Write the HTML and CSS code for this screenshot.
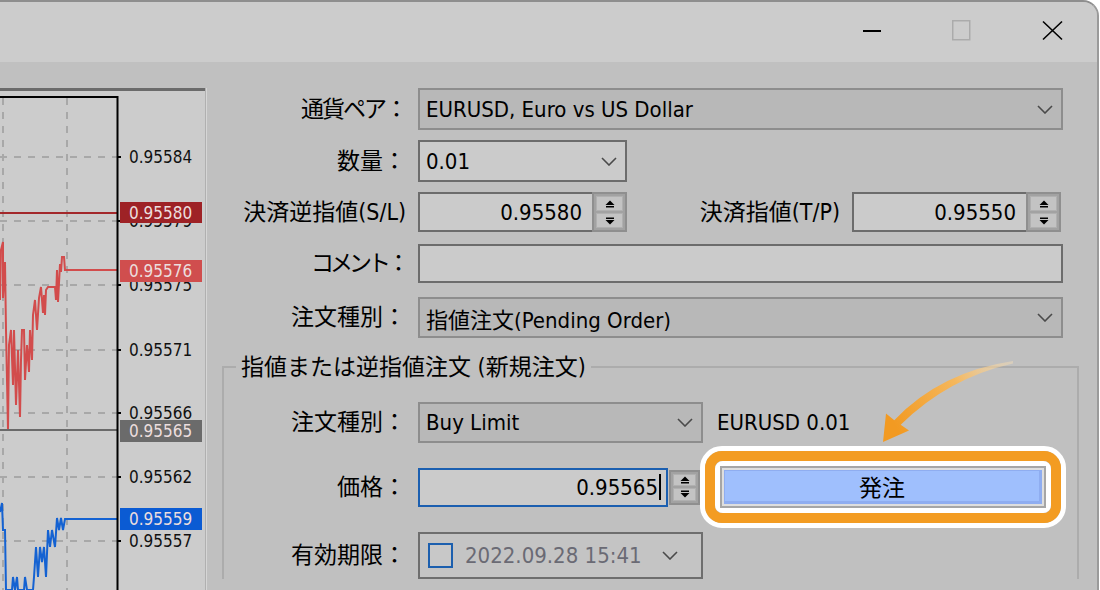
FILE: index.html
```html
<!DOCTYPE html>
<html lang="ja">
<head>
<meta charset="utf-8">
<title>注文</title>
<link rel="stylesheet" href="styles.css">
</head>
<body>
<div class="window">
  <header class="titlebar">
    <div class="tb-btn"><svg width="24" height="24" viewBox="0 0 24 24"><line x1="3" y1="12" x2="21" y2="12" stroke="#000" stroke-width="2"/></svg></div>
    <div class="tb-btn"><svg width="24" height="24" viewBox="0 0 24 24"><rect x="2.75" y="1.75" width="17" height="19" fill="none" stroke="#ababab" stroke-width="1.5"/></svg></div>
    <div class="tb-btn"><svg width="24" height="24" viewBox="0 0 24 24"><path d="M3 2.5L22 20.5M22 2.5L3 20.5" stroke="#000" stroke-width="1.6" fill="none"/></svg></div>
  </header>

  <div class="main">
    <svg class="chart" width="207" height="528" viewBox="0 62 207 528">
      <rect x="0" y="88" width="205" height="502" fill="#cccccc"/>
      <rect x="0" y="88" width="205" height="3" fill="#6b6b6b"/>
      <rect x="205" y="88" width="1" height="502" fill="#b0b0b0"/>
      <rect x="206" y="88" width="1" height="502" fill="#d6d6d6"/>
      <path d="M3 98V590M67 98V590" stroke="#a8a8a8" stroke-width="2" stroke-dasharray="7 7" fill="none"/>
      <path d="M0 157H117M0 221H117M0 285H117M0 350H117M0 413H117M0 477H117M0 541H117" stroke="#a8a8a8" stroke-width="2" stroke-dasharray="7 7" fill="none"/>

      <polyline fill="none" stroke="#d24c4c" stroke-width="2" points="0,300 1,250 3,242 3,298 5,262 6,330 8,430 9,345 11,330 13,385 14,330 16,405 18,350 20,417 21,360 22,330 24,330 25,380 27,345 29,372 30,330 32,360 33,315 35,300 37,330 39,298 41,287 43,313 44,295 45,315 46,290 48,287 55,287 56,300 57,270 58,302 60,264 61,272 62,257 64,257 65,270 117,270"/>
      <polyline fill="none" stroke="#1462d2" stroke-width="2" points="0,512 2,503 3,530 5,530 6,590 12,590 13,577 15,590 17,577 18,590 24,590 25,577 27,590 33,590 34,577 36,547 38,577 40,547 42,562 44,547 46,577 48,530 50,547 52,530 55,547 57,518 59,530 61,518 63,530 65,519 117,519"/>

      <path d="M0 213H117" stroke="#a3282b" stroke-width="2"/>
      <path d="M0 430H117" stroke="#6a6a6a" stroke-width="2"/>

      <path d="M0 97H117.5V590" stroke="#000" stroke-width="2" fill="none"/>
      <path d="M117 157h4M117 221h4M117 285h4M117 350h4M117 413h4M117 477h4M117 541h4" stroke="#000" stroke-width="2"/>

      <text class="ax" x="129" y="163">0.95584</text>
      <text class="ax" x="129" y="227">0.95579</text>
      <text class="ax" x="129" y="291">0.95575</text>
      <text class="ax" x="129" y="356">0.95571</text>
      <text class="ax" x="129" y="419">0.95566</text>
      <text class="ax" x="129" y="483">0.95562</text>
      <text class="ax" x="129" y="547">0.95557</text>

      <rect x="120" y="202" width="82" height="21" fill="#9e2226"/>
      <text class="ax lv" x="129" y="219">0.95580</text>
      <rect x="120" y="260" width="82" height="22" fill="#d04e4e"/>
      <text class="ax lv" x="129" y="277">0.95576</text>
      <rect x="120" y="420" width="82" height="22" fill="#6b6b6b"/>
      <text class="ax lv" x="129" y="437">0.95565</text>
      <rect x="120" y="508" width="82" height="22" fill="#0b5bd3"/>
      <text class="ax lv" x="129" y="525">0.95559</text>
    </svg>

    <form class="form">
      <div class="row r1">
        <label class="lbl kana-a">通貨ペア：</label>
        <div class="ctl sel w-full"><span>EURUSD, Euro vs US Dollar</span><svg class="chev" viewBox="0 0 16 9"><polyline points="1,1 8,8 15,1" fill="none" stroke="#4a4a4a" stroke-width="1.6"/></svg></div>
      </div>
      <div class="row r2">
        <label class="lbl">数量：</label>
        <div class="ctl sel light w-short"><span>0.01</span><svg class="chev" viewBox="0 0 16 9"><polyline points="1,1 8,8 15,1" fill="none" stroke="#4a4a4a" stroke-width="1.6"/></svg></div>
      </div>
      <div class="row r3">
        <label class="lbl">決済逆指値(S/L)</label>
        <div class="ctl spin w-short">
          <div class="spin-text">0.95580</div>
          <div class="spin-btns">
            <div class="spin-btn"><svg width="10" height="8" viewBox="0 0 10 8"><polygon points="0.5,5 5,0.5 9.5,5" fill="#000"/><rect x="1" y="6" width="8" height="1.5" fill="#000"/></svg></div>
            <div class="spin-btn"><svg width="10" height="8" viewBox="0 0 10 8"><rect x="1" y="0.5" width="8" height="1.5" fill="#000"/><polygon points="0.5,3 5,7.5 9.5,3" fill="#000"/></svg></div>
          </div>
        </div>
        <label class="lbl2">決済指値(T/P)</label>
        <div class="ctl spin w-short">
          <div class="spin-text">0.95550</div>
          <div class="spin-btns">
            <div class="spin-btn"><svg width="10" height="8" viewBox="0 0 10 8"><polygon points="0.5,5 5,0.5 9.5,5" fill="#000"/><rect x="1" y="6" width="8" height="1.5" fill="#000"/></svg></div>
            <div class="spin-btn"><svg width="10" height="8" viewBox="0 0 10 8"><rect x="1" y="0.5" width="8" height="1.5" fill="#000"/><polygon points="0.5,3 5,7.5 9.5,3" fill="#000"/></svg></div>
          </div>
        </div>
      </div>
      <div class="row r4">
        <label class="lbl kana-b">コメント：</label>
        <div class="ctl inp w-full"></div>
      </div>
      <div class="row r5">
        <label class="lbl">注文種別：</label>
        <div class="ctl sel w-full"><span>指値注文(Pending Order)</span><svg class="chev" viewBox="0 0 16 9"><polyline points="1,1 8,8 15,1" fill="none" stroke="#4a4a4a" stroke-width="1.6"/></svg></div>
      </div>

      <fieldset class="group">
        <legend>指値または逆指値注文 (新規注文)</legend>
        <div class="row r6">
          <label class="lbl in">注文種別：</label>
          <div class="ctl sel w-mid"><span>Buy Limit</span><svg class="chev" viewBox="0 0 16 9"><polyline points="1,1 8,8 15,1" fill="none" stroke="#4a4a4a" stroke-width="1.6"/></svg></div>
          <span class="summary">EURUSD 0.01</span>
        </div>
        <div class="row r7">
          <label class="lbl in">価格：</label>
          <div class="ctl spin price">
            <div class="spin-text active">0.95565<span class="caret"></span></div>
            <div class="spin-btns small">
              <div class="spin-btn"><svg width="10" height="8" viewBox="0 0 10 8"><polygon points="0.5,5 5,0.5 9.5,5" fill="#000"/><rect x="1" y="6" width="8" height="1.5" fill="#000"/></svg></div>
              <div class="spin-btn"><svg width="10" height="8" viewBox="0 0 10 8"><rect x="1" y="0.5" width="8" height="1.5" fill="#000"/><polygon points="0.5,3 5,7.5 9.5,3" fill="#000"/></svg></div>
            </div>
          </div>
          <div class="hl">
            <div class="hl-o">
              <div class="hl-i">
                <div class="btn"><div class="btn-face">発注</div></div>
              </div>
            </div>
          </div>
        </div>
        <div class="row r8">
          <label class="lbl in">有効期限：</label>
          <div class="ctl exp">
            <span class="cb"></span>
            <span class="date">2022.09.28 15:41</span>
            <svg class="chev" viewBox="0 0 16 9"><polyline points="1,1 8,8 15,1" fill="none" stroke="#4a4a4a" stroke-width="1.6"/></svg>
          </div>
        </div>
      </fieldset>
    </form>
  </div>

  <svg class="arrow" width="160" height="110" viewBox="870 340 160 110">
    <defs>
      <linearGradient id="ag" gradientUnits="userSpaceOnUse" x1="1013" y1="362" x2="895" y2="425">
        <stop offset="0" stop-color="#fbe2b8" stop-opacity="0.4"/>
        <stop offset="0.45" stop-color="#f5b75c"/>
        <stop offset="1" stop-color="#f29a22"/>
      </linearGradient>
    </defs>
    <path d="M1013 361 Q940 372 894.3 420.2 L886 413.5 L883 442 L909 430.5 L900.7 424.8 Q948 378 1013 363.5 Z" fill="url(#ag)"/>
  </svg>
</div>
</body>
</html>
```

FILE: styles.css
```css
* { box-sizing: border-box; }
html, body { margin: 0; padding: 0; background: #ffffff; overflow: hidden; }
body {
  font-family: "DejaVu Sans Condensed", "DejaVu Sans", Roboto, "Noto Sans CJK JP", sans-serif;
  font-stretch: condensed;
  font-size: 22px;
  color: #000;
}

.window {
  position: relative;
  width: 1099px;
  height: 590px;
  background: #c0c0c0;
  border-top: 2px solid #8e8e8e;
  border-right: 2px solid #9a9a9a;
  border-top-right-radius: 16px;
  overflow: hidden;
}

.titlebar {
  height: 60px;
  background: #cccccc;
  display: flex;
  justify-content: flex-end;
  align-items: flex-start;
  padding-top: 17px;
}
.tb-btn { width: 90px; display: flex; justify-content: center; }
.tb-btn svg { display: block; }

.main { display: flex; height: 528px; }
.chart { display: block; flex: none; }
.ax {
  font-family: "DejaVu Sans Condensed", "DejaVu Sans", Roboto, sans-serif;
  font-stretch: condensed;
  font-size: 17px;
  fill: #111;
}
.ax.lv { fill: #ecdede; }

.form {
  flex: 1;
  margin: 0;
  padding: 26px 0 0 15px;
  display: flex;
  flex-direction: column;
}

.row { display: flex; align-items: center; flex: none; }
.r1 { height: 42px; }
.r2 { height: 42px; margin-top: 10px; }
.r3 { height: 40px; margin-top: 10px; }
.r4 { height: 39px; margin-top: 12px; }
.r5 { height: 41px; margin-top: 14px; }
.r6 { height: 41px; }
.r7 { height: 82px; margin-top: 3px; }
.r8 { height: 47px; margin-top: 4px; }

.lbl {
  flex: none;
  width: 184px;
  text-align: right;
  white-space: nowrap;
  line-height: 1;
  font-size: 23px;
}
.lbl.in { width: 182px; }
.lbl.kana-a { letter-spacing: -2px; }
.lbl.kana-b { letter-spacing: -4px; }
.lbl2 {
  flex: none;
  width: 213px;
  text-align: right;
  white-space: nowrap;
  line-height: 1;
  font-size: 23px;
}
.ctl { margin-left: 12px; flex: none; height: 100%; }

.w-full { width: 645px; }
.w-short { width: 209px; }
.w-mid { width: 285px; }

.sel {
  display: flex;
  align-items: center;
  justify-content: space-between;
  border: 2px solid #8d8d8d;
  background: #b8b8b8;
  padding: 0 8px 0 6px;
  white-space: nowrap;
}
.sel.light { background: #cbcbcb; border-color: #6c6c6c; }
.chev { width: 16px; height: 9px; flex: none; display: block; }

.inp { border: 2px solid #6c6c6c; background: #cbcbcb; }

.spin { display: flex; }
.spin-text {
  flex: 1;
  display: flex;
  align-items: center;
  justify-content: flex-end;
  border: 2px solid #6c6c6c;
  border-right: none;
  background: #cbcbcb;
  padding-right: 10px;
}
.spin-btns {
  flex: none;
  width: 35px;
  display: flex;
  flex-direction: column;
  gap: 2px;
  padding: 2px;
  border: 2px solid #8f8f8f;
  background: #a2a2a2;
}
.spin-btn {
  flex: 1;
  display: flex;
  align-items: center;
  justify-content: center;
  background: #c3c3c3;
  border: 1px solid #b0b0b0;
}
.spin-btn svg { display: block; }

.price { width: 282px; height: 39px; align-items: center; }
.price .spin-text.active {
  height: 39px;
  border: 2px solid #1b5fb0;
  padding-right: 5px;
}
.spin-btns.small { width: 31px; height: 35px; margin-left: 1px; }
.caret { display: inline-block; width: 2px; height: 26px; background: #000; margin-left: 1px; }

.group {
  margin: 14px 0 0 0;
  width: 857px;
  min-width: 0;
  border: 2px solid #acacac;
  border-bottom: none;
  padding: 20px 0 0 0;
}
.group legend {
  margin-left: 12px;
  padding: 0 5px;
  line-height: 30px;
  font-size: 23px;
}

.summary { margin-left: 14px; white-space: nowrap; }

.hl {
  flex: none;
  border: 5px solid #ffffff;
  border-radius: 22px;
}
.hl-o {
  border: 10px solid #f39c22;
  border-radius: 17px;
}
.hl-i {
  border: 5px solid #ffffff;
  border-radius: 8px;
  background: #ffffff;
}
.btn {
  width: 326px;
  height: 42px;
  border: 2px solid #a6a6a6;
  background: #dedede;
  padding: 2px;
}
.btn-face {
  height: 100%;
  display: flex;
  align-items: center;
  justify-content: center;
  background: #9fbffd;
  border-style: solid;
  border-width: 1px 3px 3px 1px;
  border-color: #8fadf0;
  font-size: 23px;
}

.exp {
  width: 285px;
  display: flex;
  align-items: center;
  border: 2px solid #6e6e6e;
  background: #c4c4c4;
  padding: 0 23px 0 8px;
}
.cb {
  flex: none;
  width: 25px;
  height: 25px;
  border: 2px solid #1c5fae;
  background: #c8c8c8;
}
.date { flex: 1; margin-left: 12px; color: #6a6a74; white-space: nowrap; overflow: hidden; }

.arrow { position: absolute; left: 870px; top: 338px; display: block; }
```
